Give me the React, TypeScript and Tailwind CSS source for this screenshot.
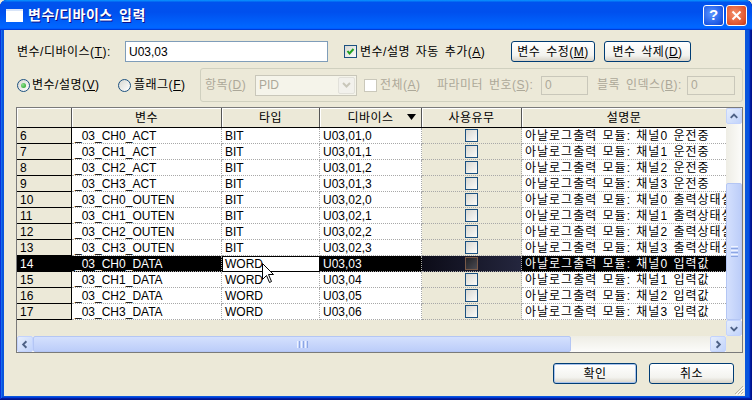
import React from "react";

const ROWS: string[][] = [
  ["6", "_03_CH0_ACT", "BIT", "U03,01,0", "아날로그출력 모듈: 채널0 운전중"],
  ["7", "_03_CH1_ACT", "BIT", "U03,01,1", "아날로그출력 모듈: 채널1 운전중"],
  ["8", "_03_CH2_ACT", "BIT", "U03,01,2", "아날로그출력 모듈: 채널2 운전중"],
  ["9", "_03_CH3_ACT", "BIT", "U03,01,3", "아날로그출력 모듈: 채널3 운전중"],
  ["10", "_03_CH0_OUTEN", "BIT", "U03,02,0", "아날로그출력 모듈: 채널0 출력상태설정"],
  ["11", "_03_CH1_OUTEN", "BIT", "U03,02,1", "아날로그출력 모듈: 채널1 출력상태설정"],
  ["12", "_03_CH2_OUTEN", "BIT", "U03,02,2", "아날로그출력 모듈: 채널2 출력상태설정"],
  ["13", "_03_CH3_OUTEN", "BIT", "U03,02,3", "아날로그출력 모듈: 채널3 출력상태설정"],
  ["14", "_03_CH0_DATA", "WORD", "U03,03", "아날로그출력 모듈: 채널0 입력값"],
  ["15", "_03_CH1_DATA", "WORD", "U03,04", "아날로그출력 모듈: 채널1 입력값"],
  ["16", "_03_CH2_DATA", "WORD", "U03,05", "아날로그출력 모듈: 채널2 입력값"],
  ["17", "_03_CH3_DATA", "WORD", "U03,06", "아날로그출력 모듈: 채널3 입력값"],
];

const SELECTED = "14";

function CheckBox({ checked, disabled, dark }: { checked?: boolean; disabled?: boolean; dark?: boolean }) {
  let cls = "border-[#1c5180] bg-[linear-gradient(135deg,#d8d8d2,#fbfbf9)]";
  if (disabled) cls = "border-[#cac8bb] bg-white";
  if (dark) cls = "border-[#7a5a48] bg-[linear-gradient(135deg,#222226,#4a4a52)]";
  return (
    <span className={`flex h-[13px] w-[13px] shrink-0 items-center justify-center border ${cls}`}>
      {checked && (
        <svg width="11" height="11" viewBox="0 0 11 11">
          <polyline points="2.5,5 4.5,7.5 8.5,3" fill="none" stroke="#21a121" strokeWidth="2" />
        </svg>
      )}
    </span>
  );
}

function Radio({ checked }: { checked?: boolean }) {
  return (
    <span className="flex h-[13px] w-[13px] shrink-0 items-center justify-center rounded-full border border-[#1c5180] bg-[linear-gradient(135deg,#d8d8d2,#fff)]">
      {checked && <span className="h-[5px] w-[5px] rounded-full bg-[radial-gradient(circle_at_35%_35%,#8fe08f,#21a121)]" />}
    </span>
  );
}

function XpButton({ children, w, def }: { children: React.ReactNode; w: string; def?: boolean }) {
  return (
    <div
      className={`flex h-[21px] shrink-0 items-center justify-center rounded-[3px] border border-[#003c74] bg-[linear-gradient(to_bottom,#ffffff,#f3f3ef_70%,#d8d3c8)] text-[12px] text-black ${w} ${
        def ? "shadow-[inset_0_0_0_1px_#a9c3ec]" : ""
      }`}
    >
      {children}
    </div>
  );
}

function Chevron({ dir }: { dir: "up" | "down" | "left" | "right" }) {
  const pts = {
    up: "4,9 7.5,5.5 11,9",
    down: "4,6 7.5,9.5 11,6",
    left: "9,4 5.5,7.5 9,11",
    right: "6,4 9.5,7.5 6,11",
  }[dir];
  return (
    <svg width="15" height="15" viewBox="0 0 15 15">
      <polyline points={pts} fill="none" stroke="#4d6185" strokeWidth="2" />
    </svg>
  );
}

function ScrollBtn({ dir }: { dir: "up" | "down" | "left" | "right" }) {
  return (
    <div className="flex h-[16px] w-[16px] shrink-0 items-center justify-center rounded-[2px] border border-[#c3d3fd] bg-[linear-gradient(135deg,#e6eefc,#c1d3fb)]">
      <Chevron dir={dir} />
    </div>
  );
}

function GridRow({ r }: { r: string[] }) {
  const sel = r[0] === SELECTED;
  const cell =
    "flex h-full shrink-0 items-center overflow-hidden whitespace-nowrap border-b border-r border-dotted border-[#a8a8a8] pl-[3px] tracking-normal";
  const dataBg = sel ? "bg-black text-white" : "bg-white text-black";
  return (
    <div className="flex h-[16px] text-[12px]">
      <div
        className={`flex h-full w-[55px] shrink-0 items-center border-b border-r border-black pl-[3px] tracking-normal ${
          sel ? "bg-black text-white" : "bg-[#ece9d8] text-black"
        }`}
      >
        {r[0]}
      </div>
      <div className={`${cell} w-[150px] ${dataBg}`}>{r[1]}</div>
      {sel ? (
        <div className="flex h-full w-[98px] shrink-0 items-center border border-black bg-white pl-[2px] tracking-normal text-black">
          {r[2]}
        </div>
      ) : (
        <div className={`${cell} w-[98px] ${dataBg}`}>{r[2]}</div>
      )}
      <div className={`${cell} w-[102px] ${dataBg}`}>{r[3]}</div>
      <div
        className={`flex h-full w-[100px] shrink-0 items-center justify-center border-b border-r border-dotted border-[#a8a8a8] ${
          sel ? "bg-[linear-gradient(to_right,#0c0c18,#24263e)]" : "bg-[#ece9d8]"
        }`}
      >
        <CheckBox dark={sel} />
      </div>
      <div
        className={`flex h-full w-[204px] shrink-0 items-center overflow-hidden whitespace-nowrap border-b border-dotted border-[#a8a8a8] pl-[3px] tracking-[1px] [word-spacing:1px] ${dataBg}`}
      >
        {r[4]}
      </div>
    </div>
  );
}

export default function App() {
  const hdr = "flex h-full shrink-0 items-center justify-center border-r border-[#555] shadow-[inset_1px_1px_#fff]";
  return (
    <div className="relative h-[400px] w-[752px] overflow-hidden bg-[#ece9d8] font-['Liberation_Sans','Noto_Sans_CJK_KR',sans-serif] text-[12px] tracking-[0.5px] text-black [word-spacing:2px]">
      <div className="flex h-full flex-col rounded-t-[7px] bg-[#0855dd] shadow-[inset_-1px_-1px_#00138c,inset_1px_1px_#0831d9,inset_-2px_-2px_#001ea0,inset_2px_2px_#166aee,inset_-3px_-3px_#003bda,inset_3px_3px_#0855dd]">
        {/* title bar */}
        <div className="flex h-[30px] shrink-0 items-center rounded-t-[7px] bg-[linear-gradient(to_bottom,#0997ff,#0053ee_8%,#0050ee_40%,#0066ff_88%,#0066ff_93%,#005bff_95%,#003dd7_96%,#003dd7)] pl-[6px] pr-[5px]">
          <div className="h-[13px] w-[17px] border-t-[2px] border-[#d8e4f8] bg-white" />
          <span className="ml-[5px] text-[14px] font-bold text-white [text-shadow:1px_1px_#0f1089]">변수/디바이스 입력</span>
          <div className="ml-auto flex gap-[2px]">
            <div className="flex h-[21px] w-[21px] items-center justify-center rounded-[3px] border border-white bg-[radial-gradient(circle_at_40%_40%,#5b95ff,#1e5ae6_70%,#1542c0)] text-[15px] font-bold tracking-normal text-white">
              ?
            </div>
            <div className="flex h-[21px] w-[21px] items-center justify-center rounded-[3px] border border-white bg-[radial-gradient(circle_at_40%_40%,#f4906a,#e0532d_70%,#c23a16)]">
              <svg width="11" height="11" viewBox="0 0 11 11">
                <path d="M1.5 1.5 L9.5 9.5 M9.5 1.5 L1.5 9.5" stroke="#fff" strokeWidth="2" />
              </svg>
            </div>
          </div>
        </div>

        {/* body */}
        <div className="relative mb-[4px] ml-[4px] mr-[7px] flex flex-1 flex-col bg-[#ece9d8] pl-[12px] pr-[2px] pt-[11px]">
          {/* row 1 */}
          <div className="flex h-[21px] items-center pl-[1px]">
            <span className="w-[108px] shrink-0">
              변수/디바이스(<u>T</u>):
            </span>
            <div className="flex h-[21px] w-[203px] shrink-0 items-center border border-[#7f9db9] bg-white pl-[3px] tracking-normal">
              U03,03
            </div>
            <div className="ml-[16px] flex w-[167px] shrink-0 items-center">
              <CheckBox checked />
              <span className="ml-[3px]">
                변수/설명 자동 추가(<u>A</u>)
              </span>
            </div>
            <XpButton w="w-[84px]">
              변수 수정(<u>M</u>)
            </XpButton>
            <div className="ml-[9px]">
              <XpButton w="w-[87px]">
                변수 삭제(<u>D</u>)
              </XpButton>
            </div>
          </div>

          {/* row 2 */}
          <div className="mt-[6px] flex h-[34px] items-center">
            <div className="flex w-[102px] shrink-0 items-center pl-[1px]">
              <Radio checked />
              <span className="ml-[2px]">
                변수/설명(<u>V</u>)
              </span>
            </div>
            <div className="flex w-[82px] shrink-0 items-center">
              <Radio />
              <span className="ml-[3px]">
                플래그(<u>F</u>)
              </span>
            </div>
            <div className="flex h-[34px] flex-1 items-center rounded-[3px] border border-[#d0d0bf] pl-[4px] text-[#aca899]">
              <span className="w-[50px] shrink-0">
                항목(<u>D</u>)
              </span>
              <div className="flex h-[21px] w-[102px] shrink-0 items-center border border-[#c9c7ba] bg-[#f5f4ea] pl-[3px] tracking-normal">
                <span className="flex-1">PID</span>
                <div className="mr-[1px] flex h-[17px] w-[17px] items-center justify-center rounded-[2px] border border-[#e2e1da] bg-[#f2f1ec]">
                  <svg width="9" height="6" viewBox="0 0 9 6">
                    <polyline points="1,1 4.5,4.5 8,1" fill="none" stroke="#c9c7ba" strokeWidth="2" />
                  </svg>
                </div>
              </div>
              <div className="ml-[7px] flex w-[73px] shrink-0 items-center">
                <CheckBox disabled />
                <span className="ml-[3px]">
                  전체(<u>A</u>)
                </span>
              </div>
              <span className="w-[104px] shrink-0">
                파라미터 번호(<u>S</u>):
              </span>
              <div className="flex h-[19px] w-[47px] shrink-0 items-center border border-[#c9c7ba] bg-[#ece9d8] pl-[3px]">0</div>
              <span className="ml-[9px] w-[90px] shrink-0">
                블록 인덱스(<u>B</u>):
              </span>
              <div className="flex h-[19px] w-[48px] shrink-0 items-center border border-[#c9c7ba] bg-[#ece9d8] pl-[3px]">0</div>
            </div>
          </div>

          {/* grid */}
          <div className="mt-[5px] flex h-[246px] w-[727px] flex-col border border-[#7a7a7a] bg-[#ece9d8]">
            <div className="flex h-[228px]">
              <div className="flex w-[709px] flex-col overflow-hidden">
                <div className="relative flex h-[20px] shrink-0 border-b border-black bg-[#ece9d8]">
                  <div className={`${hdr} w-[55px]`} />
                  <div className={`${hdr} w-[150px]`}>변수</div>
                  <div className={`${hdr} w-[98px]`}>타입</div>
                  <div className={`${hdr} relative w-[102px]`}>
                    디바이스
                    <svg className="absolute right-[5px] top-[6px]" width="9" height="6" viewBox="0 0 9 6">
                      <polygon points="0,0 9,0 4.5,6" fill="#000" />
                    </svg>
                  </div>
                  <div className={`${hdr} w-[100px]`}>사용유무</div>
                  <div className="flex h-full w-[204px] shrink-0 items-center justify-center shadow-[inset_1px_1px_#fff]">설명문</div>
                </div>
                {ROWS.map((r) => (
                  <GridRow key={r[0]} r={r} />
                ))}
              </div>
              {/* vertical scrollbar */}
              <div className="flex w-[16px] flex-col bg-[linear-gradient(to_right,#eeede5,#fcfcfa)]">
                <ScrollBtn dir="up" />
                <div className="h-[59px]" />
                <div className="flex flex-1 items-center justify-center rounded-[2px] border border-[#b4c6f4] bg-[linear-gradient(to_right,#d4e0fd,#bccdf9)]">
                  <div className="flex flex-col gap-[1px]">
                    <div className="h-[1px] w-[7px] bg-[#eef3fe]" />
                    <div className="h-[1px] w-[7px] bg-[#8ca6e4]" />
                    <div className="h-[1px] w-[7px] bg-[#eef3fe]" />
                    <div className="h-[1px] w-[7px] bg-[#8ca6e4]" />
                    <div className="h-[1px] w-[7px] bg-[#eef3fe]" />
                    <div className="h-[1px] w-[7px] bg-[#8ca6e4]" />
                  </div>
                </div>
                <ScrollBtn dir="down" />
              </div>
            </div>
            {/* horizontal scrollbar */}
            <div className="flex h-[16px]">
              <div className="flex w-[709px] bg-[linear-gradient(to_bottom,#eeede5,#fcfcfa)]">
                <ScrollBtn dir="left" />
                <div className="flex h-[16px] w-[538px] items-center justify-center rounded-[2px] border border-[#b4c6f4] bg-[linear-gradient(to_bottom,#d4e0fd,#bccdf9)]">
                  <div className="flex gap-[1px]">
                    <div className="h-[7px] w-[1px] bg-[#eef3fe]" />
                    <div className="h-[7px] w-[1px] bg-[#8ca6e4]" />
                    <div className="h-[7px] w-[1px] bg-[#eef3fe]" />
                    <div className="h-[7px] w-[1px] bg-[#8ca6e4]" />
                    <div className="h-[7px] w-[1px] bg-[#eef3fe]" />
                    <div className="h-[7px] w-[1px] bg-[#8ca6e4]" />
                  </div>
                </div>
                <div className="flex-1" />
                <ScrollBtn dir="right" />
              </div>
              <div className="w-[16px] bg-[#ece9d8]" />
            </div>
          </div>

          {/* buttons */}
          <div className="mt-[10px] flex justify-end gap-[12px] pr-[9px]">
            <XpButton w="w-[84px]" def>
              확인
            </XpButton>
            <XpButton w="w-[85px]">취소</XpButton>
          </div>

          {/* resize grip */}
          <svg className="absolute bottom-[1px] right-[1px]" width="11" height="11" viewBox="0 0 11 11">
            <path d="M10 2 L2 10 M10 5 L5 10 M10 8 L8 10" stroke="#bab5a5" strokeWidth="1" />
            <path d="M11 3 L3 11 M11 6 L6 11 M11 9 L9 11" stroke="#fff" strokeWidth="1" />
          </svg>
        </div>
      </div>

      {/* mouse cursor */}
      <svg className="absolute left-[262px] top-[263px]" width="13" height="21" viewBox="0 0 13 21">
        <polygon points="0.5,0.5 0.5,16.5 4.5,12.5 7.5,19.5 9.5,18.5 6.5,11.5 11.5,11.5" fill="#fff" stroke="#000" strokeWidth="1" />
      </svg>
    </div>
  );
}
